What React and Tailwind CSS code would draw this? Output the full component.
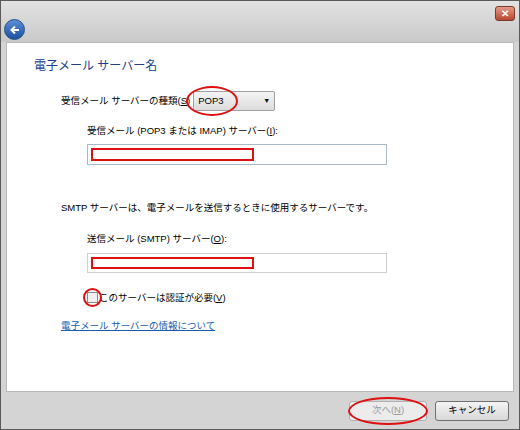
export default function App() {
  const font = { fontFamily: '"Liberation Sans", "Noto Sans CJK JP", sans-serif' };
  return (
    <div className="w-[520px] h-[430px] bg-[#d4d4d4] border border-[#5a5a5a] flex flex-col text-[9.5px] text-black" style={font}>
      <div className="h-[41px] relative bg-gradient-to-b from-[#e2e2e2] to-[#c9c9c9] flex items-end px-[3px] pb-[2px]">
        <div className="w-[21px] h-[21px] rounded-full bg-gradient-to-b from-[#5b8fd6] to-[#1c4f9e] border border-[#234c86] flex items-center justify-center">
          <svg width="12" height="12" viewBox="0 0 12 12"><path d="M10 6H3M6 2.5L2.5 6L6 9.5" stroke="white" strokeWidth="2" fill="none" /></svg>
        </div>
        <div className="absolute right-[4px] top-[5px] w-[20px] h-[15px] rounded-[3px] bg-gradient-to-b from-[#e39a88] to-[#b8452d] border border-[#7c3a2d] flex items-center justify-center text-white text-[10px] font-bold">✕</div>
      </div>
      <div className="flex-1 bg-white mx-[5px] border border-[#b8b8b8] flex flex-col pl-[27px] pt-[14px] relative">
        <div className="text-[12px] text-[#1e3d8a]">電子メール サーバー名</div>
        <div className="flex items-center mt-[16px] ml-[27px]">
          <span>受信メール サーバーの種類(<u>S</u>)</span>
          <div className="relative ml-[3px] w-[82px] h-[20px] border border-[#a0a0a0] rounded-[2px] bg-gradient-to-b from-[#f4f4f4] to-[#dcdcdc] flex items-center justify-between px-[4px]">
            <span>POP3</span>
            <span className="text-[7px]">▼</span>
            <div className="absolute left-[-8px] top-[-6px] w-[52px] h-[30px] rounded-[50%] border-2 border-[#d11]" />
          </div>
        </div>
        <div className="ml-[53px] mt-[13px]">受信メール (POP3 または IMAP) サーバー(<u>I</u>):</div>
        <div className="ml-[53px] mt-[6px] w-[300px] h-[21px] border border-[#a9b9c8] p-[3px]">
          <div className="w-[163px] h-[13px] border-2 border-[#d11]" />
        </div>
        <div className="ml-[27px] mt-[36px]">SMTP サーバーは、電子メールを送信するときに使用するサーバーです。</div>
        <div className="ml-[53px] mt-[16px]">送信メール (SMTP) サーバー(<u>O</u>):</div>
        <div className="ml-[53px] mt-[7px] w-[300px] h-[20px] border border-[#cfcfcf] p-[3px]">
          <div className="w-[163px] h-[12px] border-2 border-[#d11]" />
        </div>
        <div className="ml-[53px] mt-[18px] flex items-center">
          <div className="relative w-[11px] h-[11px] border border-[#8a8a8a] bg-[#f0f0f0] mr-[1px]">
            <div className="absolute left-[-5px] top-[-5px] w-[19px] h-[19px] rounded-full border-2 border-[#d11]" />
          </div>
          <span>このサーバーは認証が必要(<u>V</u>)</span>
        </div>
        <div className="ml-[27px] mt-[14px] text-[#1a5cb0] underline">電子メール サーバーの情報について</div>
      </div>
      <div className="h-[37px] flex items-center justify-end gap-[8px] pr-[10px]">
        <div className="relative w-[78px] h-[20px] border border-[#b0b0b0] rounded-[3px] bg-[#ececec] text-[#9a9a9a] flex items-center justify-center">
          次へ(<u>N</u>)
          <div className="absolute left-[-2px] top-[-5px] w-[80px] h-[28px] rounded-[50%] border-2 border-[#d11]" />
        </div>
        <div className="w-[74px] h-[20px] border border-[#707070] rounded-[3px] bg-gradient-to-b from-[#f4f4f4] to-[#d8d8d8] flex items-center justify-center">キャンセル</div>
      </div>
    </div>
  );
}
